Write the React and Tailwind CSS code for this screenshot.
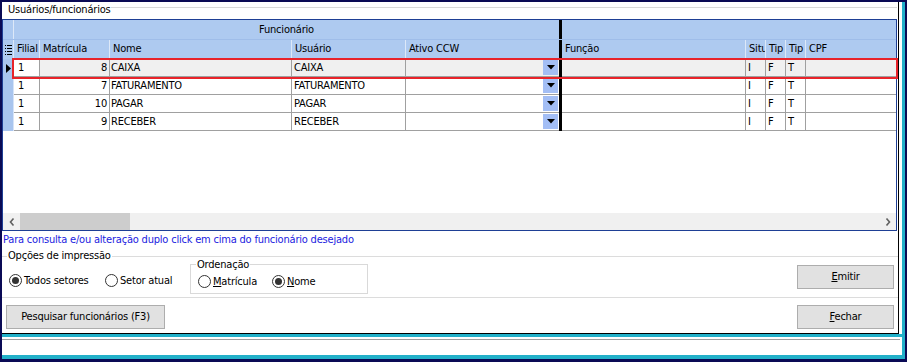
import React from "react";

const FONT =
  "font-['DejaVu_Sans_Condensed','DejaVu_Sans',sans-serif] [font-stretch:condensed] tracking-[-0.2px]";

const rows = [
  { filial: "1", mat: "8", nome: "CAIXA", usu: "CAIXA" },
  { filial: "1", mat: "7", nome: "FATURAMENTO", usu: "FATURAMENTO" },
  { filial: "1", mat: "10", nome: "PAGAR", usu: "PAGAR" },
  { filial: "1", mat: "9", nome: "RECEBER", usu: "RECEBER" },
];

function Radio({ checked, children }) {
  return (
    <div className="flex items-center">
      <span className="w-[13px] h-[13px] rounded-full border border-[#333333] bg-white flex items-center justify-center shrink-0">
        {checked && <span className="w-[7px] h-[7px] rounded-full bg-[#333333]" />}
      </span>
      <span className="ml-[2px] leading-[13px] whitespace-nowrap">{children}</span>
    </div>
  );
}

function DropBtn() {
  return (
    <div className="w-[15px] h-[15px] bg-[#a3bef5] flex items-center justify-center mr-[1px]">
      <svg width="8" height="5" viewBox="0 0 8 5">
        <polygon points="0,0 8,0 4,4.5" fill="#000" />
      </svg>
    </div>
  );
}

function HeaderIcon() {
  return (
    <svg width="7" height="10" viewBox="0 0 7 10">
      <rect x="0" y="0" width="1" height="1" fill="#000" />
      <rect x="0" y="3" width="1" height="1" fill="#000" />
      <rect x="0" y="6" width="1" height="1" fill="#000" />
      <rect x="0" y="9" width="1" height="1" fill="#000" />
      <rect x="2" y="0" width="5" height="1" fill="#000" />
      <rect x="2" y="3" width="5" height="1" fill="#000" />
      <rect x="2" y="6" width="5" height="1" fill="#000" />
      <rect x="2" y="9" width="5" height="1" fill="#000" />
    </svg>
  );
}

function Grid() {
  const hdr = "h-full border-r border-[#dde8f8] pl-[3px] leading-[18px] whitespace-nowrap overflow-hidden";
  return (
    <div className="relative w-[895px] h-[212px] border border-[#1e3f95] flex flex-col bg-white">
      {/* group header */}
      <div className="h-[20px] flex bg-[#aecaf0] border-b border-[#9fbde9]">
        <div className="w-[11px] h-full border-r border-[#dde8f8]" />
        <div className="w-[545px] h-full text-center leading-[19px]">Funcionário</div>
        <div className="w-[3px] h-full bg-black" />
        <div className="flex-1 h-full" />
      </div>
      {/* column header */}
      <div className="h-[19px] flex bg-[#aecaf0]">
        <div className="w-[11px] h-full border-r border-[#dde8f8] flex items-center justify-center">
          <HeaderIcon />
        </div>
        <div className={`w-[26px] ${hdr}`}>Filial</div>
        <div className={`w-[70px] ${hdr}`}>Matrícula</div>
        <div className={`w-[182px] ${hdr}`}>Nome</div>
        <div className={`w-[114px] ${hdr}`}>Usuário</div>
        <div className="w-[153px] h-full pl-[3px] leading-[18px]">Ativo CCW</div>
        <div className="w-[3px] h-full bg-black" />
        <div className={`w-[184px] ${hdr}`}>Função</div>
        <div className={`w-[20px] ${hdr} pl-[2px]`}>Situ</div>
        <div className={`w-[20px] ${hdr} pl-[2px]`}>Tip</div>
        <div className={`w-[20px] ${hdr} pl-[2px]`}>Tip</div>
        <div className="flex-1 h-full pl-[3px] leading-[18px]">CPF</div>
      </div>
      {/* rows */}
      {rows.map((r, i) => {
        const sel = i === 0;
        const bg = sel ? "bg-[#f0f0f0]" : "bg-white";
        const cell = `h-full border-r border-b border-[#a0a0a0] leading-[17px] whitespace-nowrap overflow-hidden ${bg}`;
        return (
          <div key={i} className="h-[18px] flex">
            <div className="w-[11px] h-full bg-[#a9c5ee] border-r border-[#d6e3f7] flex items-center pl-[3px]">
              {sel && (
                <svg width="5" height="9" viewBox="0 0 5 9">
                  <polygon points="0,0 5,4.5 0,9" fill="#000" />
                </svg>
              )}
            </div>
            <div className="w-[26px] h-full border-r border-b border-[#a0a0a0] leading-[17px] pl-[4px] bg-white">{r.filial}</div>
            <div className={`w-[70px] ${cell} text-right pr-[2px]`}>{r.mat}</div>
            <div className={`w-[182px] ${cell} pl-[1px]`}>{r.nome}</div>
            <div className={`w-[114px] ${cell} pl-[2px]`}>{r.usu}</div>
            <div className={`w-[153px] h-full border-b border-[#a0a0a0] flex items-center justify-end ${bg}`}>
              <DropBtn />
            </div>
            <div className="w-[3px] h-full bg-black" />
            <div className={`w-[184px] ${cell}`} />
            <div className={`w-[20px] ${cell} pl-[2px]`}>I</div>
            <div className={`w-[20px] ${cell} pl-[2px]`}>F</div>
            <div className={`w-[20px] ${cell} pl-[2px]`}>T</div>
            <div className={`flex-1 h-full border-b border-[#a0a0a0] ${bg}`} />
          </div>
        );
      })}
      <div className="flex-1" />
      {/* horizontal scrollbar */}
      <div className="h-[17px] flex bg-[#f0f0f0]">
        <div className="w-[17px] h-full flex items-center justify-center">
          <svg width="6" height="8" viewBox="0 0 6 8">
            <polyline points="4.5,0.5 1.5,4 4.5,7.5" fill="none" stroke="#606060" strokeWidth="1.6" />
          </svg>
        </div>
        <div className="w-[110px] h-full bg-[#cdcdcd]" />
        <div className="flex-1" />
        <div className="w-[17px] h-full flex items-center justify-center">
          <svg width="6" height="8" viewBox="0 0 6 8">
            <polyline points="1.5,0.5 4.5,4 1.5,7.5" fill="none" stroke="#606060" strokeWidth="1.6" />
          </svg>
        </div>
      </div>
      {/* red highlight rectangle */}
      <div className="absolute left-[9px] top-[38px] w-[886px] h-[21px] border-2 border-[#e8232a] pointer-events-none" />
    </div>
  );
}

export default function App() {
  return (
    <div className={`w-[907px] h-[362px] bg-[#0a0a55] pt-[2px] pl-[2px] pr-[2px] pb-[3px] text-[11px] text-black ${FONT}`}>
      <div className="h-full bg-white border-r-[3px] border-b-[4px] border-[#22b0c9] flex flex-col">
        <div className="flex">
          <div className="w-[897px] h-[332px] border-r border-b border-black flex flex-col">
            {/* title */}
            <div className="h-[17px] flex items-start">
              <span className="ml-[6px] leading-[13px] pt-[1px] whitespace-nowrap">Usuários/funcionários</span>
              <div className="flex-1 mt-[5px] mr-[1px] border-t border-[#d9d9d9]" />
            </div>
            <Grid />
            {/* message */}
            <div className="h-[18px] pl-[1px] pt-[2px] leading-[14px] text-[#2121e0] whitespace-nowrap">
              Para consulta e/ou alteração duplo click em cima do funcionário desejado
            </div>
            {/* group box opções de impressão */}
            <div className="relative mt-[7px] h-[42px] border-t border-b border-[#dcdcdc] flex items-start">
              <span className="absolute left-[5px] -top-[8px] bg-white px-[1px] leading-[13px] whitespace-nowrap">
                Opções de impressão
              </span>
              <div className="ml-[7px] mt-[17px] w-[96px]">
                <Radio checked>Todos setores</Radio>
              </div>
              <div className="mt-[17px] w-[85px]">
                <Radio>Setor atual</Radio>
              </div>
              <div className="relative mt-[7px] w-[178px] h-[30px] border border-[#d9d9d9] flex items-start">
                <span className="absolute left-[5px] -top-[6px] bg-white px-[1px] leading-[12px] whitespace-nowrap">
                  Ordenação
                </span>
                <div className="ml-[7px] mt-[10px] w-[74px]">
                  <Radio>
                    <u>M</u>atrícula
                  </Radio>
                </div>
                <div className="mt-[10px]">
                  <Radio checked>
                    <u>N</u>ome
                  </Radio>
                </div>
              </div>
              <button className="ml-auto mr-[4px] mt-[8px] w-[97px] h-[24px] bg-[#e1e1e1] border border-[#adadad] text-center">
                <u>E</u>mitir
              </button>
            </div>
            {/* bottom buttons */}
            <div className="mt-[7px] h-[24px] flex">
              <button className="ml-[4px] w-[159px] h-[24px] bg-[#e1e1e1] border border-[#adadad] text-center whitespace-nowrap">
                Pesquisar funcionários (F3)
              </button>
              <button className="ml-auto mr-[4px] w-[97px] h-[24px] bg-[#e1e1e1] border border-[#adadad] text-center">
                <u>F</u>echar
              </button>
            </div>
            <div className="flex-1" />
          </div>
        </div>
        <div className="h-[3px] bg-[#22b0c9]" />
        <div className="h-[2px]" />
        <div className="h-px bg-[#a0a0a0] mr-[2px]" />
        <div className="flex-1" />
      </div>
    </div>
  );
}
